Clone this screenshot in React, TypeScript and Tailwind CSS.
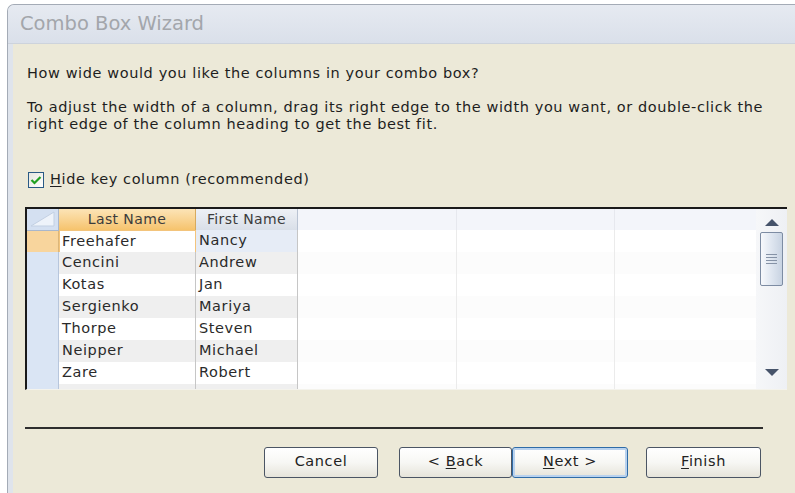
import React from "react";

type Person = { last: string; first: string };

const people: Person[] = [
  { last: "Freehafer", first: "Nancy" },
  { last: "Cencini", first: "Andrew" },
  { last: "Kotas", first: "Jan" },
  { last: "Sergienko", first: "Mariya" },
  { last: "Thorpe", first: "Steven" },
  { last: "Neipper", first: "Michael" },
  { last: "Zare", first: "Robert" },
  { last: "", first: "" },
];

const cols = "grid grid-cols-[32px_137px_102px_159px_158px_160px]";

function HeaderRow() {
  return (
    <div className={`${cols} h-[21px] text-[14px] tracking-[0.4px] text-[#3c3c3c]`}>
      <div className="relative border-r border-b border-[#a9b7cc] bg-[#d4e0f1]">
        <svg className="absolute inset-0" width="31" height="20" viewBox="0 0 31 20">
          <polygon points="4,17 27,3 27,17" fill="#eef3fa" />
          <polygon points="4,17 27,3 27,17" fill="none" stroke="#c3d0e3" strokeWidth="1" />
        </svg>
      </div>
      <div className="flex items-center justify-center border-r border-b border-[#d7aa5e] bg-gradient-to-b from-[#fce4b6] to-[#f6c36c]">
        Last Name
      </div>
      <div className="flex items-center justify-center border-r border-b border-[#b9c3d2] bg-gradient-to-b from-[#eef1f6] to-[#d9dfe8]">
        First Name
      </div>
      <div className="border-r border-b border-[#e6e8ee] bg-[#f3f5fa]" />
      <div className="border-r border-b border-[#e6e8ee] bg-[#f3f5fa]" />
      <div className="border-b border-[#e6e8ee] bg-[#f3f5fa]" />
    </div>
  );
}

function DataRow({ person, index }: { person: Person; index: number }) {
  const current = index === 0;
  const shaded = index % 2 === 1;
  return (
    <div className={`${cols} h-[22px] text-[14.5px] tracking-[0.6px] text-[#2a2a2a]`}>
      <div
        className={
          current
            ? "border-r border-b border-[#dcb77a] bg-[#f8d59d]"
            : "border-r border-b border-[#b7c6dc] bg-[#dae5f4]"
        }
      />
      <div
        className={
          current
            ? "flex items-center border border-[#f3c47c] bg-white pl-[2px]"
            : `flex items-center border-r border-b border-[#c6c6c6] pl-[3px] ${shaded ? "bg-[#efefef]" : "bg-white"}`
        }
      >
        {person.last}
      </div>
      <div
        className={`flex items-center border-r border-b border-[#c6c6c6] pl-[3px] ${
          current ? "bg-[#e6ecf6]" : shaded ? "bg-[#efefef]" : "bg-white"
        }`}
      >
        {person.first}
      </div>
      <div className={`border-r border-b border-[#ebebeb] ${shaded ? "bg-[#fcfcfc]" : "bg-white"}`} />
      <div className={`border-r border-b border-[#ebebeb] ${shaded ? "bg-[#fcfcfc]" : "bg-white"}`} />
      <div className={`border-b border-[#ebebeb] ${shaded ? "bg-[#fcfcfc]" : "bg-white"}`} />
    </div>
  );
}

function ScrollBar() {
  return (
    <div className="flex w-[31px] shrink-0 flex-col items-center bg-gradient-to-r from-[#f6f7f9] to-[#eef0f4]">
      <svg className="mt-[10px]" width="14" height="7" viewBox="0 0 14 7">
        <polygon points="7,0 14,7 0,7" fill="#46536a" />
      </svg>
      <div className="mt-[6px] flex h-[54px] w-[23px] flex-col items-center justify-center gap-[2px] rounded-[2px] border border-[#7d8ca3] bg-gradient-to-r from-[#f7f9fc] via-[#dfe6f0] to-[#c8d3e2]">
        <span className="h-px w-[11px] bg-[#8592a6]" />
        <span className="h-px w-[11px] bg-[#8592a6]" />
        <span className="h-px w-[11px] bg-[#8592a6]" />
        <span className="h-px w-[11px] bg-[#8592a6]" />
      </div>
      <svg className="mt-auto mb-[13px]" width="14" height="7" viewBox="0 0 14 7">
        <polygon points="0,0 14,0 7,7" fill="#46536a" />
      </svg>
    </div>
  );
}

function WizardButton({ children, primary }: { children: React.ReactNode; primary?: boolean }) {
  return (
    <button
      type="button"
      className={`flex h-[31px] w-full items-center justify-center rounded-[3px] border bg-gradient-to-b from-white via-[#f7f7f4] to-[#e6e4da] text-[14.5px] tracking-[0.6px] text-[#222] ${
        primary ? "border-[#2f6ca8] shadow-[inset_0_0_0_2px_#b9d2ee]" : "border-[#4b5564]"
      }`}
    >
      <span>{children}</span>
    </button>
  );
}

export default function App() {
  return (
    <div className="h-[493px] w-[795px] overflow-hidden bg-white font-['DejaVu_Sans',sans-serif]">
      <div className="ml-[7px] mt-[4px] flex h-[489px] flex-col overflow-hidden rounded-tl-[7px] border-l border-t border-[#a4abb6] bg-[#dfe4ec]">
        <div className="flex h-[39px] shrink-0 items-center border-b border-[#cdd3dc] bg-gradient-to-b from-[#e6eaf1] to-[#dae0ea] pl-[12px] text-[19.5px] text-[#a3a6ab]">
          Combo Box Wizard
        </div>
        <div className="ml-[5px] flex flex-1 flex-col bg-[#ece9d8] pt-[21px] text-[14.5px] tracking-[0.6px] text-[#1e1e1e]">
          <p className="pl-[14px] leading-[17px]">
            How wide would you like the columns in your combo box?
          </p>
          <p className="mt-[17px] pl-[14px] leading-[17px]">
            To adjust the width of a column, drag its right edge to the width you want, or double-click the
            <br />
            right edge of the column heading to get the best fit.
          </p>

          <label className="mt-[36px] flex items-center pl-[15px]">
            <span className="flex h-[16px] w-[16px] items-center justify-center border border-[#2a5a85] bg-gradient-to-br from-[#e6e6df] to-white">
              <svg width="12" height="10" viewBox="0 0 12 10">
                <path d="M1.5 5 L4.5 8 L10.5 2" fill="none" stroke="#21a121" strokeWidth="2.2" />
              </svg>
            </span>
            <span className="ml-[6px]">
              <span className="underline underline-offset-2">H</span>ide key column (recommended)
            </span>
          </label>

          <div className="ml-[12px] mt-[16px] flex h-[183px] w-[762px] overflow-hidden border-l-2 border-t-2 border-b border-[#1a1a1a] border-b-[#f4f3ec] bg-white">
            <div className="flex-1 overflow-hidden">
              <HeaderRow />
              {people.map((p, i) => (
                <DataRow key={i} person={p} index={i} />
              ))}
            </div>
            <ScrollBar />
          </div>

          <div className="ml-[12px] mt-[37px] h-[2px] w-[738px] bg-[#2e2e2e]" />

          <div className="ml-[251px] mt-[18px] flex">
            <div className="w-[114px]">
              <WizardButton>Cancel</WizardButton>
            </div>
            <div className="ml-[21px] w-[113px]">
              <WizardButton>
                &lt; <span className="underline underline-offset-2">B</span>ack
              </WizardButton>
            </div>
            <div className="w-[116px]">
              <WizardButton primary>
                <span className="underline underline-offset-2">N</span>ext &gt;
              </WizardButton>
            </div>
            <div className="ml-[18px] w-[115px]">
              <WizardButton>
                <span className="underline underline-offset-2">F</span>inish
              </WizardButton>
            </div>
          </div>
        </div>
      </div>
    </div>
  );
}
